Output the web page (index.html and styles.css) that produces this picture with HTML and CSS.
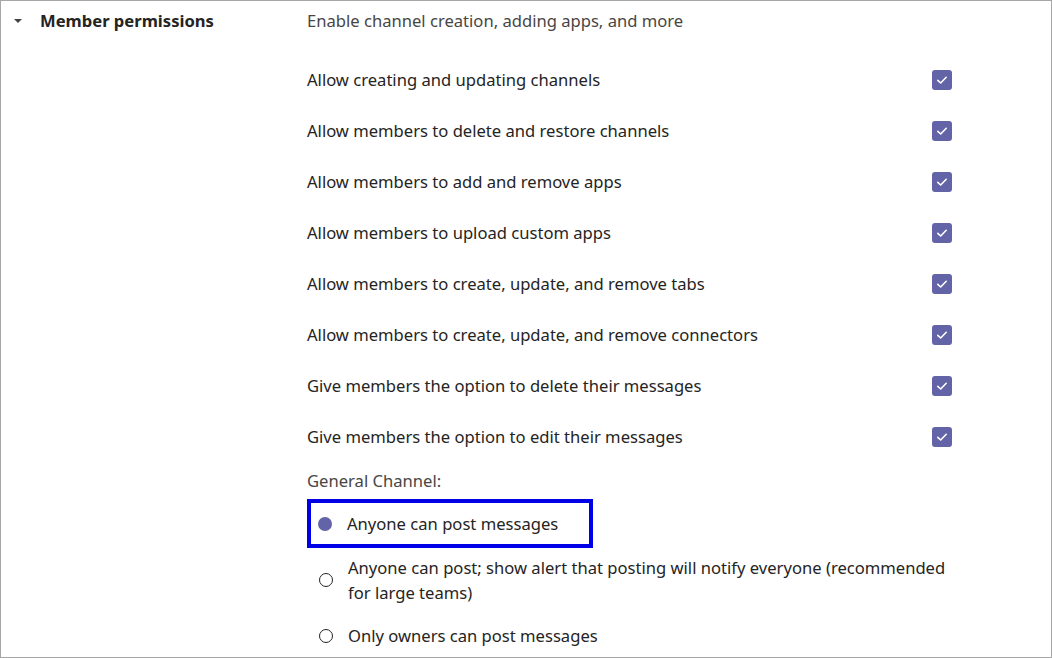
FILE: index.html
```
<!DOCTYPE html>
<html lang="en">
<head>
    <meta charset="UTF-8">
    <title>Member permissions</title>
    <link rel="stylesheet" href="styles.css">
</head>
<body>

    <div class="frame">
        <div class="section">
            <div class="section-head">
                <span class="caret"></span>
                <h2>Member permissions</h2>
            </div>

            <div class="section-body">
                <p class="desc">Enable channel creation, adding apps, and more</p>

                <div class="opt-row">
                    <span>Allow creating and updating channels</span>
                    <span class="check"><svg viewBox="0 0 20 20"><path d="M5.8 10.3l2.9 2.7 5.5-5.7"/></svg></span>
                </div>
                <div class="opt-row">
                    <span>Allow members to delete and restore channels</span>
                    <span class="check"><svg viewBox="0 0 20 20"><path d="M5.8 10.3l2.9 2.7 5.5-5.7"/></svg></span>
                </div>
                <div class="opt-row">
                    <span>Allow members to add and remove apps</span>
                    <span class="check"><svg viewBox="0 0 20 20"><path d="M5.8 10.3l2.9 2.7 5.5-5.7"/></svg></span>
                </div>
                <div class="opt-row">
                    <span>Allow members to upload custom apps</span>
                    <span class="check"><svg viewBox="0 0 20 20"><path d="M5.8 10.3l2.9 2.7 5.5-5.7"/></svg></span>
                </div>
                <div class="opt-row">
                    <span>Allow members to create, update, and remove tabs</span>
                    <span class="check"><svg viewBox="0 0 20 20"><path d="M5.8 10.3l2.9 2.7 5.5-5.7"/></svg></span>
                </div>
                <div class="opt-row">
                    <span>Allow members to create, update, and remove connectors</span>
                    <span class="check"><svg viewBox="0 0 20 20"><path d="M5.8 10.3l2.9 2.7 5.5-5.7"/></svg></span>
                </div>
                <div class="opt-row">
                    <span>Give members the option to delete their messages</span>
                    <span class="check"><svg viewBox="0 0 20 20"><path d="M5.8 10.3l2.9 2.7 5.5-5.7"/></svg></span>
                </div>
                <div class="opt-row">
                    <span>Give members the option to edit their messages</span>
                    <span class="check"><svg viewBox="0 0 20 20"><path d="M5.8 10.3l2.9 2.7 5.5-5.7"/></svg></span>
                </div>

                <p class="group-label">General Channel:</p>

                <div class="radios">
                    <div class="radio-row highlighted">
                        <span class="radio on"></span>
                        <span>Anyone can post messages</span>
                    </div>
                    <div class="radio-row">
                        <span class="radio"></span>
                        <span class="radio-text">Anyone can post; show alert that posting will notify everyone (recommended for large teams)</span>
                    </div>
                    <div class="radio-row">
                        <span class="radio"></span>
                        <span>Only owners can post messages</span>
                    </div>
                </div>
            </div>
        </div>
    </div>

</body>
</html>
```

FILE: styles.css
```
html, body {
    margin: 0;
    padding: 0;
    background: #fff;
}
body {
    font-family: "Segoe UI", "Noto Sans", sans-serif;
    font-size: 16.6px;
    color: #252423;
}
.frame {
    width: 1052px;
    height: 658px;
    box-sizing: border-box;
    border: 1px solid #a6a6a6;
    overflow: hidden;
}
.section {
    display: flex;
    padding-top: 7px;
}
.section-head {
    width: 306px;
    display: flex;
    align-items: center;
    height: 25px;
}
.caret {
    width: 0;
    height: 0;
    margin-left: 13px;
    margin-right: 18px;
    border-left: 4px solid transparent;
    border-right: 4px solid transparent;
    border-top: 4px solid #424242;
}
.section-head h2 {
    margin: 0;
    font-size: 16.6px;
    font-weight: 700;
    line-height: 25px;
}
.section-body {
    width: 645px;
}
.desc {
    margin: 0 0 21px;
    line-height: 25px;
    color: #484644;
}
.opt-row {
    height: 51px;
    display: flex;
    justify-content: space-between;
    align-items: center;
}
.check {
    width: 20px;
    height: 20px;
    border-radius: 3px;
    background: #6264a7;
    display: flex;
}
.check svg {
    width: 20px;
    height: 20px;
    fill: none;
    stroke: #fff;
    stroke-width: 1.6;
    stroke-linecap: round;
    stroke-linejoin: round;
}
.group-label {
    margin: 6px 0 6px;
    line-height: 25px;
    color: #484644;
}
.radio-row {
    display: flex;
    align-items: center;
    line-height: 25px;
    padding-left: 12px;
    margin-bottom: 18px;
}
.radio-row.highlighted {
    display: inline-flex;
    border: 4px solid #0000e6;
    padding: 8px 31px 8px 7px;
    margin-bottom: 7px;
}
.radio {
    width: 14px;
    height: 14px;
    box-sizing: border-box;
    border-radius: 50%;
    border: 1px solid #252423;
    margin-right: 15px;
    flex-shrink: 0;
}
.radio.on {
    border: none;
    background: #6264a7;
}
.radio-text {
    width: 604px;
}
```
